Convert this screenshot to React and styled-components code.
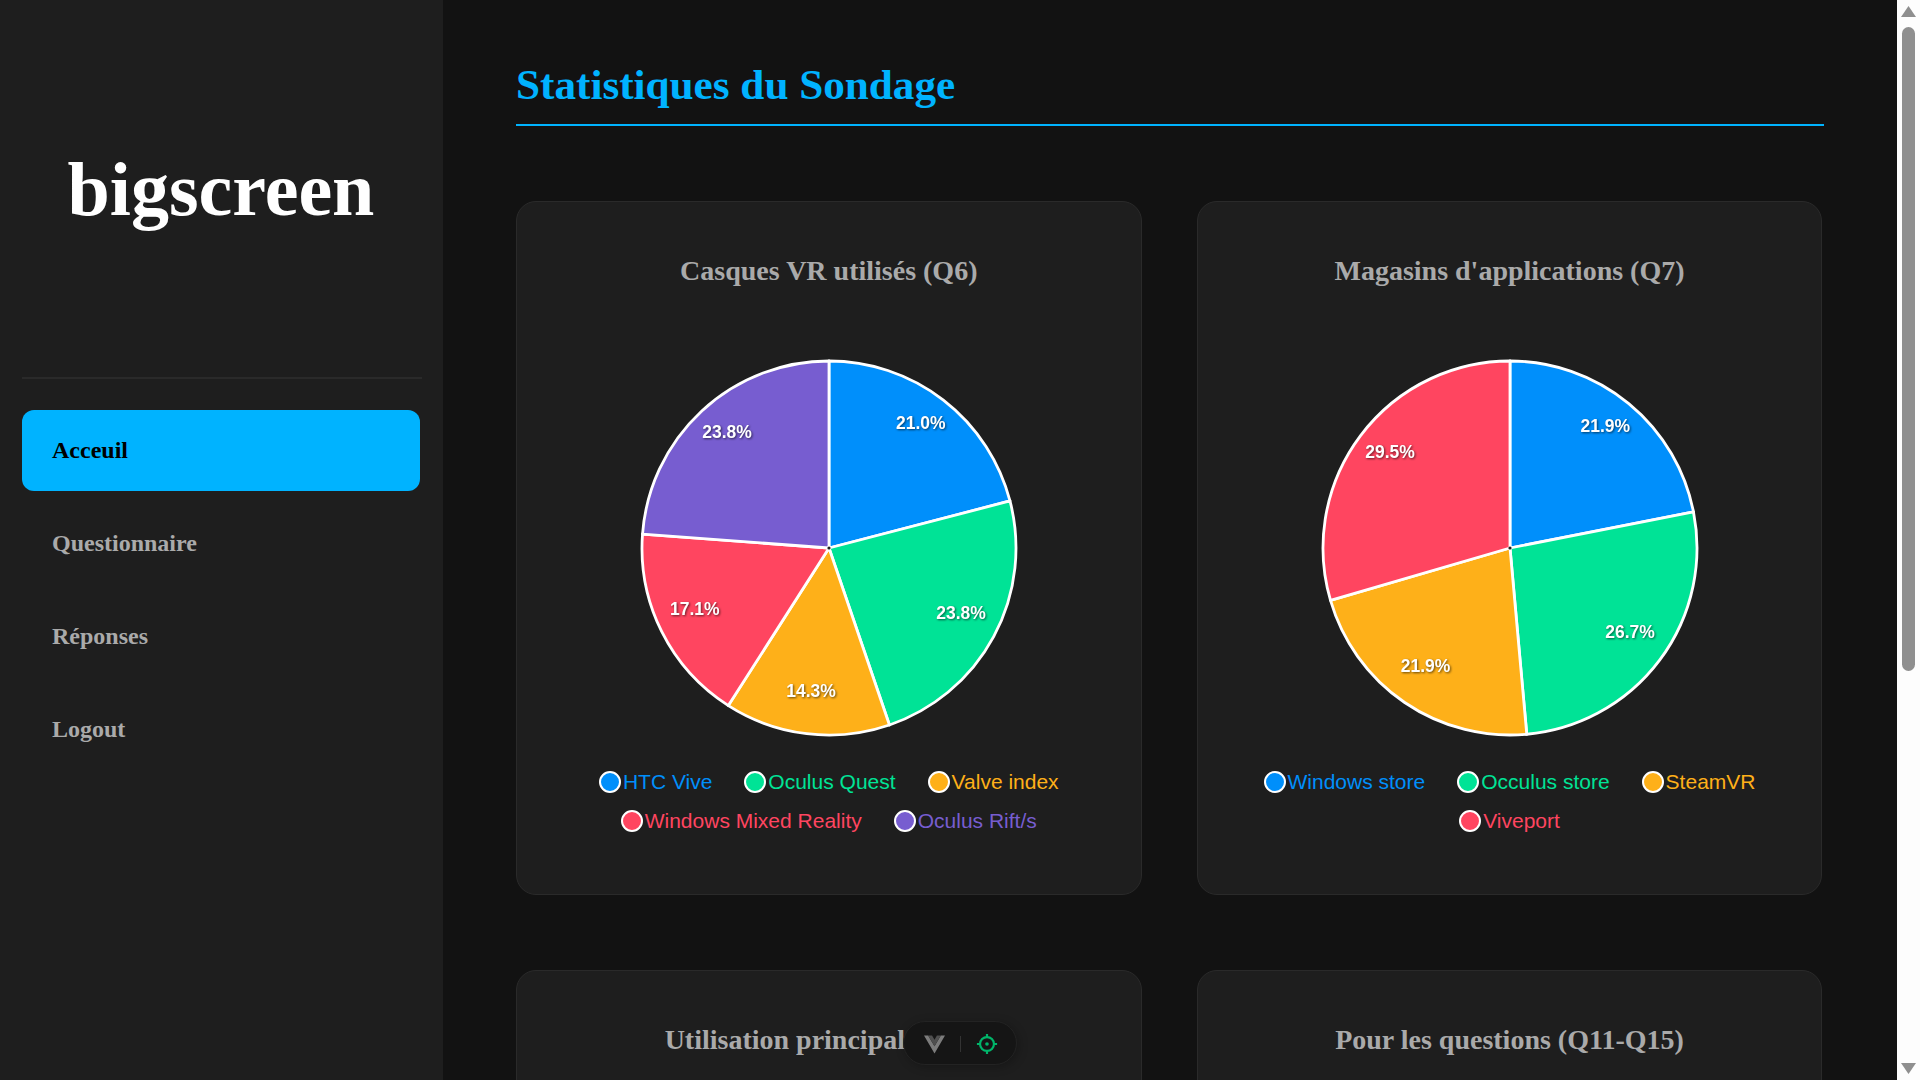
import React from 'react';
import styled, { createGlobalStyle } from 'styled-components';

const COLORS = ['#008FFB', '#00E396', '#FEB019', '#FF4560', '#775DD0'];
const RADIUS = 187;

const Global = createGlobalStyle`
    html, body {
        margin: 0;
        height: 100%;
        overflow: hidden;
        background: #121212;
    }
    * { box-sizing: border-box; }
`;

const Layout = styled.div`
    display: flex;
    height: 100vh;
    overflow: hidden;
    font-family: "Liberation Serif", "Times New Roman", serif;
`;

const Sidebar = styled.aside`
    flex: 0 0 443px;
    padding: 0 21px 0 22px;
    background: #1e1e1e;
`;

const Logo = styled.div`
    display: flex;
    align-items: center;
    justify-content: center;
    height: 379px;
    padding: 1px 2px 0 0;
    border-bottom: 2px solid #2a2a2a;
    color: #fff;
    font-size: 76px;
    font-weight: bold;
`;

const NavList = styled.nav`
    display: flex;
    flex-direction: column;
    gap: 12px;
    width: 398px;
    margin-top: 31px;
`;

const NavItem = styled.a`
    display: flex;
    align-items: center;
    height: 81px;
    padding-left: 30px;
    border-radius: 12px;
    font-size: 24px;
    font-weight: bold;
    color: ${props => (props.$active ? '#000' : '#aaa')};
    background: ${props => (props.$active ? '#00b3ff' : 'transparent')};
`;

const Main = styled.main`
    flex: 1;
    min-width: 0;
    padding: 60px 73px 0;
    overflow: hidden;
`;

const PageTitle = styled.h1`
    margin: 0;
    padding-bottom: 14px;
    border-bottom: 2px solid #00b3ff;
    font-size: 43.2px;
    line-height: 50px;
    font-weight: bold;
    color: #00b3ff;
`;

const Grid = styled.div`
    display: grid;
    grid-template-columns: 625.5px 625px;
    column-gap: 55.5px;
    row-gap: 75px;
    margin-top: 75px;
`;

const Card = styled.section`
    height: 694px;
    padding: 53px 30px 0;
    border: 1px solid #2a2a2a;
    border-radius: 20px;
    background: #1e1e1e;
`;

const CardTitle = styled.h3`
    margin: 0;
    font-size: 28px;
    line-height: 32px;
    font-weight: bold;
    text-align: center;
    color: #aaa;
`;

const Pie = styled.svg`
    display: block;
    margin: 72px auto 0;
`;

const SliceLabel = styled.text`
    font-family: "Liberation Sans", Arial, sans-serif;
    font-size: 17.5px;
    font-weight: bold;
    fill: #fff;
    text-anchor: middle;
    dominant-baseline: central;
    filter: drop-shadow(1px 1px 1px rgba(0, 0, 0, 0.6));
`;

const Legend = styled.ul`
    display: flex;
    flex-wrap: wrap;
    justify-content: center;
    gap: 15px 32px;
    margin: 33px 0 0;
    padding: 0;
    list-style: none;
`;

const LegendItem = styled.li`
    display: flex;
    align-items: center;
    gap: 2px;
    height: 24px;
    font-family: "Liberation Sans", Arial, sans-serif;
    font-size: 21px;
    color: ${props => props.$color};
`;

const LegendDot = styled.span`
    width: 22px;
    height: 22px;
    border: 2px solid #fff;
    border-radius: 50%;
    background: ${props => props.$color};
`;

const ScrollRail = styled.div`
    flex: 0 0 23px;
    display: flex;
    flex-direction: column;
    align-items: center;
    height: 100vh;
    background: #fdfdfd;
`;

const ScrollArrow = styled.svg`
    flex: none;
    display: block;
    margin-top: ${props => props.$top || 0}px;
`;

const ScrollThumb = styled.div`
    flex: none;
    width: 13px;
    height: 644px;
    margin-top: 10px;
    border-radius: 7px;
    background: #8f8f8f;
`;

const DevPill = styled.div`
    position: fixed;
    left: 903px;
    top: 1021px;
    display: flex;
    align-items: center;
    gap: 15px;
    width: 114px;
    height: 44px;
    padding: 2px 0 0 20px;
    border: 1px solid #232323;
    border-radius: 22px;
    background: #151515;
    box-shadow: 2px 2px 10px rgba(0, 0, 0, 0.25);
`;

const DevDivider = styled.span`
    width: 1px;
    height: 16px;
    background: #333;
`;

const polar = (r, pct) => {
    const a = (pct / 100) * 2 * Math.PI;
    return [r * Math.sin(a), -r * Math.cos(a)];
};

const PieChart = ({ data }) => {
    const total = data.reduce((sum, d) => sum + d.value, 0);
    const size = RADIUS * 2 + 4;
    let acc = 0;
    const slices = data.map((d, i) => {
        const pct = (d.value / total) * 100;
        const start = polar(RADIUS, acc);
        const end = polar(RADIUS, acc + pct);
        const mid = polar(150, acc + pct / 2);
        acc += pct;
        return { pct, start, end, mid, color: COLORS[i], large: pct > 50 ? 1 : 0 };
    });
    return (
        <Pie width={size} height={size} viewBox={`${-size / 2} ${-size / 2} ${size} ${size}`}>
            {slices.map(s => (
                <path
                    key={s.color}
                    d={`M0 0L${s.start[0]} ${s.start[1]}A${RADIUS} ${RADIUS} 0 ${s.large} 1 ${s.end[0]} ${s.end[1]}Z`}
                    fill={s.color}
                    stroke="#fff"
                    strokeWidth="2.8"
                    strokeLinejoin="round"
                />
            ))}
            <circle r="1.6" fill="#1e1e1e" />
            {slices.map(s => (
                <SliceLabel key={s.color} x={s.mid[0]} y={s.mid[1] - 6}>
                    {s.pct.toFixed(1)}%
                </SliceLabel>
            ))}
        </Pie>
    );
};

const ChartCard = ({ title, data }) => (
    <Card>
        <CardTitle>{title}</CardTitle>
        {data && <PieChart data={data} />}
        {data && (
            <Legend>
                {data.map((d, i) => (
                    <LegendItem key={d.label} $color={COLORS[i]}>
                        <LegendDot $color={COLORS[i]} />
                        {d.label}
                    </LegendItem>
                ))}
            </Legend>
        )}
    </Card>
);

const headsets = [
    { label: 'HTC Vive', value: 22 },
    { label: 'Oculus Quest', value: 25 },
    { label: 'Valve index', value: 15 },
    { label: 'Windows Mixed Reality', value: 18 },
    { label: 'Oculus Rift/s', value: 25 },
];

const stores = [
    { label: 'Windows store', value: 23 },
    { label: 'Occulus store', value: 28 },
    { label: 'SteamVR', value: 23 },
    { label: 'Viveport', value: 31 },
];

const App = () => (
    <Layout>
        <Global />
        <Sidebar>
            <Logo>bigscreen</Logo>
            <NavList>
                <NavItem $active>Acceuil</NavItem>
                <NavItem>Questionnaire</NavItem>
                <NavItem>Réponses</NavItem>
                <NavItem>Logout</NavItem>
            </NavList>
        </Sidebar>
        <Main>
            <PageTitle>Statistiques du Sondage</PageTitle>
            <Grid>
                <ChartCard title="Casques VR utilisés (Q6)" data={headsets} />
                <ChartCard title="Magasins d'applications (Q7)" data={stores} />
                <ChartCard title="Utilisation principale (Q10)" />
                <ChartCard title="Pour les questions (Q11-Q15)" />
            </Grid>
        </Main>
        <ScrollRail>
            <ScrollArrow $top={6} width="15" height="11" viewBox="0 0 15 11">
                <path d="M7.5 0L15 11H0Z" fill="#8f8f8f" />
            </ScrollArrow>
            <ScrollThumb />
            <ScrollArrow $top={392} width="15" height="11" viewBox="0 0 15 11">
                <path d="M0 0H15L7.5 11Z" fill="#8f8f8f" />
            </ScrollArrow>
        </ScrollRail>
        <DevPill>
            <svg width="21" height="19" viewBox="0 0 256 221">
                <path d="M204.8 0H256L128 220.8 0 0h50.56L128 133.12 204.8 0Z" fill="#7c7c7c" />
                <path d="M50.56 0L128 133.12 204.8 0h-47.36L128 51.2 97.92 0H50.56Z" fill="#4f4f4f" />
            </svg>
            <DevDivider />
            <svg width="22" height="22" viewBox="0 0 24 24" fill="none" stroke="#00b56a" strokeWidth="2.4">
                <circle cx="12" cy="12" r="7.6" />
                <path d="M12 1v3.5M12 19.5V23M1 12h3.5M19.5 12H23" />
                <circle cx="12" cy="12" r="2" fill="#00b56a" stroke="none" />
            </svg>
        </DevPill>
    </Layout>
);

export default App;
